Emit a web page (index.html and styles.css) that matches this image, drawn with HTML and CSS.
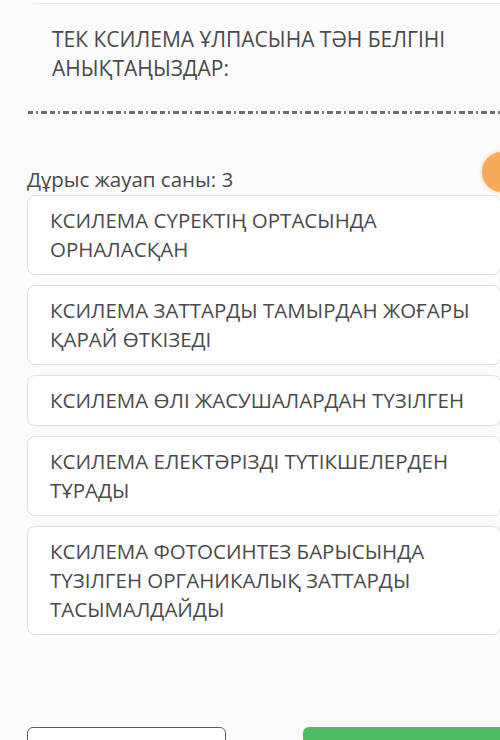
FILE: index.html
```html
<!DOCTYPE html>
<html>
<head>
  <meta charset="utf-8">
  <link rel="stylesheet" href="styles.css">
</head>
<body>

  <div class="top-card"></div>

  <div class="question">
    <h2 class="question-title">ТЕК КСИЛЕМА ҰЛПАСЫНА ТӘН БЕЛГІНІ АНЫҚТАҢЫЗДАР:</h2>
    <div class="dash-line"></div>
  </div>

  <div class="answers">
    <div class="answer-count">Дұрыс жауап саны: 3</div>
    <span class="timer-dot"></span>

    <div class="option">КСИЛЕМА СҮРЕКТІҢ ОРТАСЫНДА ОРНАЛАСҚАН</div>
    <div class="option">КСИЛЕМА ЗАТТАРДЫ ТАМЫРДАН ЖОҒАРЫ ҚАРАЙ ӨТКІЗЕДІ</div>
    <div class="option">КСИЛЕМА ӨЛІ ЖАСУШАЛАРДАН ТҮЗІЛГЕН</div>
    <div class="option">КСИЛЕМА ЕЛЕКТӘРІЗДІ ТҮТІКШЕЛЕРДЕН ТҰРАДЫ</div>
    <div class="option">КСИЛЕМА ФОТОСИНТЕЗ БАРЫСЫНДА ТҮЗІЛГЕН ОРГАНИКАЛЫҚ ЗАТТАРДЫ ТАСЫМАЛДАЙДЫ</div>
  </div>

  <div class="actions">
    <button class="btn-outline"></button>
    <button class="btn-green"></button>
  </div>

</body>
</html>
```
FILE: styles.css
```css
body {
  margin: 0;
  width: 500px;
  height: 740px;
  overflow: hidden;
  background: #fbfbfb;
  font-family: 'Open Sans', 'Noto Sans', sans-serif;
  color: #4b4b4b;
}

.top-card {
  height: 3px;
  margin-left: 30px;
  border-bottom: 1px solid #ececec;
  border-bottom-left-radius: 4px;
  background: #fff;
}

.question {
  padding: 21px 0 0 52px;
}

.question-title {
  margin: 0;
  width: 430px;
  font-size: 21px;
  font-weight: normal;
  line-height: 29px;
  color: #4a4a4a;
}

.dash-line {
  height: 3px;
  margin: 28px 0 0 -24px;
  background:
    repeating-linear-gradient(90deg, #555 0 5px, transparent 5px 8px, #666 8px 10px, transparent 10px 13px, #555 13px 19px, transparent 19px 22px);
  opacity: 0.85;
}

.answers {
  position: relative;
  padding: 51px 0 0 27px;
  margin-right: -1px;
}

.answer-count {
  font-size: 20.5px;
  line-height: 29px;
  margin-bottom: 1px;
  color: #4a4a4a;
}

.timer-dot {
  position: absolute;
  top: 38px;
  right: -21px;
  width: 40px;
  height: 40px;
  border-radius: 50%;
  background: #f6ab58;
  box-shadow: 0 0 4px rgba(246, 171, 88, 0.6);
}

.option {
  background: #fff;
  border: 1px solid #e0e0e0;
  border-radius: 8px;
  padding: 10px 20px 10px 22px;
  margin-bottom: 10px;
  font-size: 20.5px;
  line-height: 29px;
  color: #4a4a4a;
}

.actions {
  display: flex;
  justify-content: space-between;
  padding: 82px 0 0 27px;
  margin-right: -10px;
}

.btn-outline {
  width: 199px;
  height: 44px;
  background: #fff;
  border: 1px solid #5a5f63;
  border-radius: 6px;
}

.btn-green {
  width: 207px;
  height: 44px;
  background: #4fbe63;
  border: none;
  border-radius: 6px;
}
```
